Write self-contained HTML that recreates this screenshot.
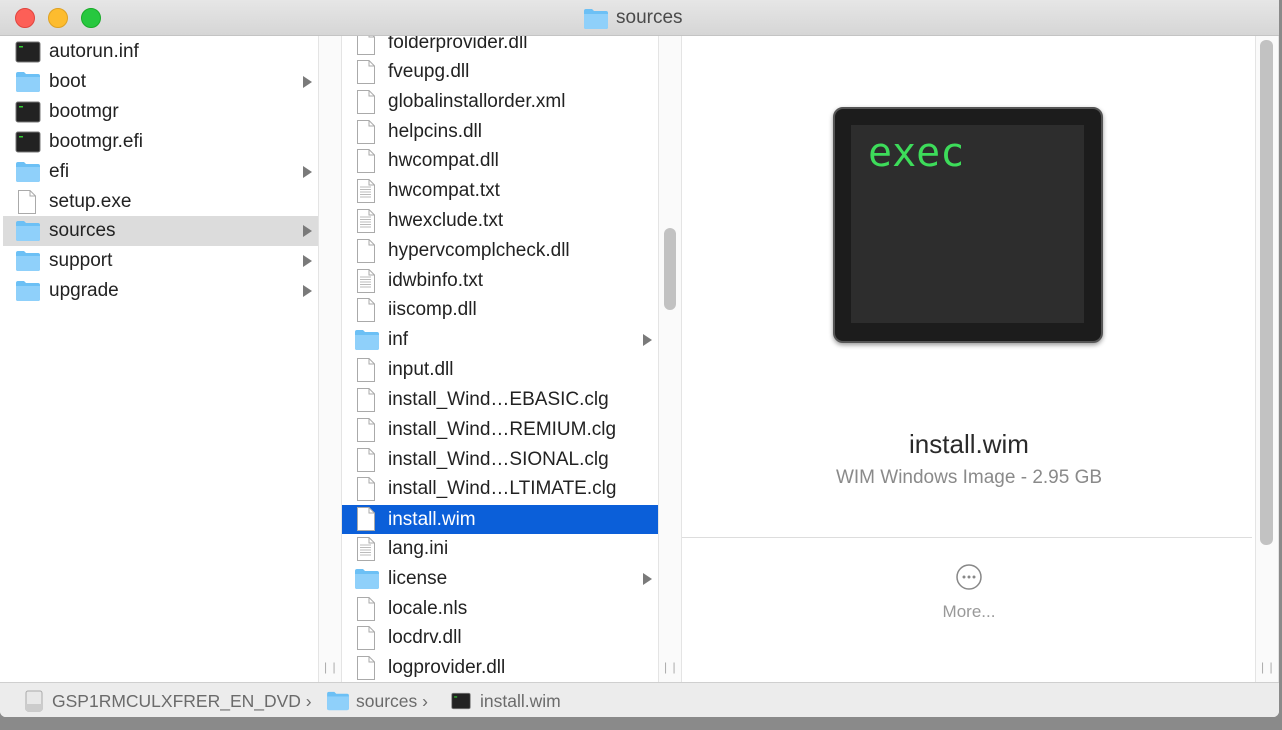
<!DOCTYPE html>
<html><head><style>
*{margin:0;padding:0;box-sizing:border-box}
body{width:1282px;height:730px;background:#8a8a8a;font-family:"Liberation Sans",sans-serif;position:relative;overflow:hidden}
.win{position:absolute;left:0;top:0;width:1279px;height:717px;background:#fff;border-radius:0 0 6px 6px;overflow:hidden}
.title{position:absolute;left:0;top:0;width:100%;height:36px;background:linear-gradient(#e6e6e6,#d6d6d6);border-bottom:1px solid #c4c4c4;z-index:5}
.dot{position:absolute;top:8px;width:20px;height:20px;border-radius:50%}
.ttl{position:absolute;left:583px;top:7px;font-size:19px;color:#4a4a4a}
.col{position:absolute;top:36px;height:646px;overflow:hidden}
.row{position:absolute;height:30px;left:0;right:0;font-size:19px;color:#222;line-height:30px}
.row span{position:absolute;left:46px}
.sel{background:#dcdcdc}
.blue{background:#0b5fd9;color:#fff}
.arr{position:absolute;right:6px;top:9px;width:0;height:0;border-left:9px solid #7a7a7a;border-top:6px solid transparent;border-bottom:6px solid transparent}
.ic{position:absolute;left:12px;top:4px}
.bar{position:absolute;background:#fafafa;border-left:1px solid #e4e4e4;border-right:1px solid #e4e4e4}
.grip{position:absolute;font-size:12px;color:#aaa;letter-spacing:1px}
.path{position:absolute;left:0;top:682px;width:100%;height:35px;background:#ececec;border-top:1px solid #cfcfcf;font-size:17.5px;color:#6b6b6b;line-height:36px}
</style></head><body>
<svg width="0" height="0" style="position:absolute">
<defs>
<symbol id="term" viewBox="0 0 26 22"><rect x="1" y="1" width="24" height="20" rx="2" fill="#222" stroke="#777" stroke-width="1"/><rect x="4" y="5" width="4" height="1.5" fill="#3c3"/></symbol>
<symbol id="fold" viewBox="0 0 26 22"><path d="M1 3 Q1 1 3 1 H9 L11 3 H23 Q25 3 25 5 V19 Q25 21 23 21 H3 Q1 21 1 19Z" fill="#6cc0f5"/><path d="M1 6 H25 V19 Q25 21 23 21 H3 Q1 21 1 19Z" fill="#8fd0fa"/></symbol>
<symbol id="doc" viewBox="0 0 20 24"><path d="M1.5 .5 H13 L18.5 6 V23.5 H1.5Z" fill="#fff" stroke="#aaa"/><path d="M13 .5 V6 H18.5" fill="none" stroke="#aaa"/></symbol>
<symbol id="txt" viewBox="0 0 20 24"><path d="M1.5 .5 H13 L18.5 6 V23.5 H1.5Z" fill="#fff" stroke="#aaa"/><path d="M13 .5 V6 H18.5" fill="none" stroke="#aaa"/><path d="M4 8H15M4 10.5H15M4 13H15M4 15.5H15M4 18H15" stroke="#bbb"/></symbol>
</defs></svg>
<div class="win">
<div class="title">
<div class="dot" style="left:15px;background:#fd5f57;border:1px solid #e0443e"></div>
<div class="dot" style="left:48px;background:#fdbc2e;border:1px solid #dea123"></div>
<div class="dot" style="left:81px;background:#27c83f;border:1px solid #1aab29"></div>
<svg style="position:absolute;left:582px;top:8px" width="28" height="22"><use href="#fold"/></svg>
<div class="ttl" style="left:616px">sources</div>
</div>

<div class="col" style="left:3px;width:315px">
<div class="row" style="top:1px"><svg class="ic" width="26" height="22"><use href="#term"/></svg><span>autorun.inf</span></div>
<div class="row" style="top:31px"><svg class="ic" width="26" height="22"><use href="#fold"/></svg><span>boot</span><i class="arr"></i></div>
<div class="row" style="top:61px"><svg class="ic" width="26" height="22"><use href="#term"/></svg><span>bootmgr</span></div>
<div class="row" style="top:91px"><svg class="ic" width="26" height="22"><use href="#term"/></svg><span>bootmgr.efi</span></div>
<div class="row" style="top:121px"><svg class="ic" width="26" height="22"><use href="#fold"/></svg><span>efi</span><i class="arr"></i></div>
<div class="row" style="top:151px"><svg class="ic" style="left:14px;top:3px" width="20" height="24"><use href="#doc"/></svg><span>setup.exe</span></div>
<div class="row sel" style="top:180px"><svg class="ic" width="26" height="22"><use href="#fold"/></svg><span>sources</span><i class="arr"></i></div>
<div class="row" style="top:210px"><svg class="ic" width="26" height="22"><use href="#fold"/></svg><span>support</span><i class="arr"></i></div>
<div class="row" style="top:240px"><svg class="ic" width="26" height="22"><use href="#fold"/></svg><span>upgrade</span><i class="arr"></i></div>
</div>
<div class="bar" style="left:318px;top:36px;width:24px;height:646px"></div>
<div class="grip" style="left:324px;top:660px">| |</div>

<div class="col" style="left:342px;width:316px">
<div class="row" style="top:-8px"><svg class="ic" style="left:14px;top:3px" width="20" height="24"><use href="#doc"/></svg><span>folderprovider.dll</span></div>
<div class="row" style="top:21px"><svg class="ic" style="left:14px;top:3px" width="20" height="24"><use href="#doc"/></svg><span>fveupg.dll</span></div>
<div class="row" style="top:51px"><svg class="ic" style="left:14px;top:3px" width="20" height="24"><use href="#doc"/></svg><span>globalinstallorder.xml</span></div>
<div class="row" style="top:81px"><svg class="ic" style="left:14px;top:3px" width="20" height="24"><use href="#doc"/></svg><span>helpcins.dll</span></div>
<div class="row" style="top:110px"><svg class="ic" style="left:14px;top:3px" width="20" height="24"><use href="#doc"/></svg><span>hwcompat.dll</span></div>
<div class="row" style="top:140px"><svg class="ic" style="left:14px;top:3px" width="20" height="24"><use href="#txt"/></svg><span>hwcompat.txt</span></div>
<div class="row" style="top:170px"><svg class="ic" style="left:14px;top:3px" width="20" height="24"><use href="#txt"/></svg><span>hwexclude.txt</span></div>
<div class="row" style="top:200px"><svg class="ic" style="left:14px;top:3px" width="20" height="24"><use href="#doc"/></svg><span>hypervcomplcheck.dll</span></div>
<div class="row" style="top:230px"><svg class="ic" style="left:14px;top:3px" width="20" height="24"><use href="#txt"/></svg><span>idwbinfo.txt</span></div>
<div class="row" style="top:259px"><svg class="ic" style="left:14px;top:3px" width="20" height="24"><use href="#doc"/></svg><span>iiscomp.dll</span></div>
<div class="row" style="top:289px"><svg class="ic" width="26" height="22"><use href="#fold"/></svg><span>inf</span><i class="arr"></i></div>
<div class="row" style="top:319px"><svg class="ic" style="left:14px;top:3px" width="20" height="24"><use href="#doc"/></svg><span>input.dll</span></div>
<div class="row" style="top:349px"><svg class="ic" style="left:14px;top:3px" width="20" height="24"><use href="#doc"/></svg><span>install_Wind…EBASIC.clg</span></div>
<div class="row" style="top:379px"><svg class="ic" style="left:14px;top:3px" width="20" height="24"><use href="#doc"/></svg><span>install_Wind…REMIUM.clg</span></div>
<div class="row" style="top:409px"><svg class="ic" style="left:14px;top:3px" width="20" height="24"><use href="#doc"/></svg><span>install_Wind…SIONAL.clg</span></div>
<div class="row" style="top:438px"><svg class="ic" style="left:14px;top:3px" width="20" height="24"><use href="#doc"/></svg><span>install_Wind…LTIMATE.clg</span></div>
<div class="row blue" style="top:469px;height:29px"><svg class="ic" style="left:14px;top:2px" width="20" height="24"><use href="#doc"/></svg><span>install.wim</span></div>
<div class="row" style="top:498px"><svg class="ic" style="left:14px;top:3px" width="20" height="24"><use href="#txt"/></svg><span>lang.ini</span></div>
<div class="row" style="top:528px"><svg class="ic" width="26" height="22"><use href="#fold"/></svg><span>license</span><i class="arr"></i></div>
<div class="row" style="top:558px"><svg class="ic" style="left:14px;top:3px" width="20" height="24"><use href="#doc"/></svg><span>locale.nls</span></div>
<div class="row" style="top:587px"><svg class="ic" style="left:14px;top:3px" width="20" height="24"><use href="#doc"/></svg><span>locdrv.dll</span></div>
<div class="row" style="top:617px"><svg class="ic" style="left:14px;top:3px" width="20" height="24"><use href="#doc"/></svg><span>logprovider.dll</span></div>
</div>
<div class="bar" style="left:658px;top:36px;width:24px;height:646px"></div>
<div style="position:absolute;left:664px;top:228px;width:12px;height:82px;border-radius:6px;background:#c2c2c2"></div>
<div class="grip" style="left:664px;top:660px">| |</div>

<div style="position:absolute;left:833px;top:107px;width:270px;height:236px;border-radius:10px;background:#1c1c1c;border:2px solid #555;box-shadow:0 2px 5px rgba(0,0,0,.4)"></div>
<div style="position:absolute;left:851px;top:125px;width:233px;height:198px;background:#2d2d2d"></div>
<div style="position:absolute;left:868px;top:130px;font-family:'DejaVu Sans Mono',monospace;font-size:40px;color:#3ddc5a">exec</div>
<div style="position:absolute;left:682px;width:574px;top:429px;text-align:center;font-size:26px;color:#2a2a2a">install.wim</div>
<div style="position:absolute;left:682px;width:574px;top:467px;text-align:center;font-size:19px;color:#8a8a8a">WIM Windows Image - 2.95 GB</div>
<div style="position:absolute;left:682px;top:537px;width:570px;height:1px;background:#ddd"></div>
<svg style="position:absolute;left:955px;top:563px" width="28" height="28"><circle cx="14" cy="14" r="12" fill="none" stroke="#888" stroke-width="1.5"/><circle cx="9" cy="14" r="1.5" fill="#888"/><circle cx="14" cy="14" r="1.5" fill="#888"/><circle cx="19" cy="14" r="1.5" fill="#888"/></svg>
<div style="position:absolute;left:682px;width:574px;top:602px;text-align:center;font-size:17px;color:#999">More...</div>
<div class="bar" style="left:1255px;top:36px;width:24px;height:646px"></div>
<div style="position:absolute;left:1260px;top:40px;width:13px;height:505px;border-radius:6px;background:#c2c2c2"></div>
<div class="grip" style="left:1261px;top:660px">| |</div>

<div class="path">
<svg style="position:absolute;left:25px;top:7px" width="18" height="22"><rect x="1" y="1" width="16" height="20" rx="2" fill="#e8e8e8" stroke="#aaa"/><rect x="1" y="14" width="16" height="7" fill="#ccc"/></svg>
<span style="position:absolute;left:52px">GSP1RMCULXFRER_EN_DVD ›</span>
<svg style="position:absolute;left:326px;top:8px" width="24" height="20"><use href="#fold"/></svg>
<span style="position:absolute;left:356px">sources ›</span>
<svg style="position:absolute;left:451px;top:9px" width="20" height="18"><use href="#term"/></svg>
<span style="position:absolute;left:480px">install.wim</span>
</div>
</div>
</body></html>
